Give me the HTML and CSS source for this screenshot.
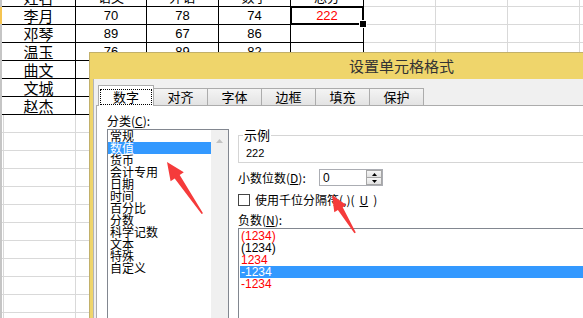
FILE: index.html
```html
<!DOCTYPE html>
<html lang="zh-CN">
<head>
  <meta charset="UTF-8" />
  <title>设置单元格格式</title>
  <link rel="stylesheet" href="styles.css">
</head>
<body>

  <!-- Sheet -->
  <div class="sheet">
    <div class="row-head"></div>
    <div class="grid">
      <div class="cell name">姓名</div><div class="cell">语文</div><div class="cell">外语</div><div class="cell">数学</div><div class="cell">总分</div>
      <div class="cell name">李月</div><div class="cell">70</div><div class="cell">78</div><div class="cell">74</div><div class="cell total">222</div>
      <div class="cell name">邓琴</div><div class="cell">89</div><div class="cell">67</div><div class="cell">86</div><div class="cell"></div>
      <div class="cell name">温玉</div><div class="cell">76</div><div class="cell">89</div><div class="cell">82</div><div class="cell"></div>
      <div class="cell name">曲文</div><div class="cell">81</div><div class="cell">75</div><div class="cell">90</div><div class="cell"></div>
      <div class="cell name">文城</div><div class="cell">68</div><div class="cell">72</div><div class="cell">79</div><div class="cell"></div>
      <div class="cell name">赵杰</div><div class="cell">92</div><div class="cell">84</div><div class="cell">88</div><div class="cell"></div>
    </div>
  </div>

  <!-- Dialog -->
  <div class="dialog">
    <div class="title">设置单元格格式</div>
    <div class="dlg-body">
      <div class="tabs">
        <div class="tab active"><span class="focus">数字</span></div>
        <div class="tab">对齐</div>
        <div class="tab">字体</div>
        <div class="tab">边框</div>
        <div class="tab">填充</div>
        <div class="tab">保护</div>
      </div>
      <div class="panel">
        <div class="col-left">
          <div class="label">分类(<u>C</u>):</div>
          <div class="listbox">
            <ul class="items">
              <li>常规</li>
              <li class="sel">数值</li>
              <li>货币</li>
              <li>会计专用</li>
              <li>日期</li>
              <li>时间</li>
              <li>百分比</li>
              <li>分数</li>
              <li>科学记数</li>
              <li>文本</li>
              <li>特殊</li>
              <li>自定义</li>
            </ul>
            <div class="vscroll">
              <svg width="7" height="4" viewBox="0 0 7 4"><path d="M0 4 L3.5 0 L7 4 Z" fill="#c2c2c2"/></svg>
            </div>
          </div>
        </div>
        <div class="col-right">
          <fieldset class="sample">
            <legend>示例</legend>
            <div class="sample-value">222</div>
          </fieldset>
          <div class="field-row">
            <span class="field-label">小数位数(<u>D</u>):</span>
            <div class="spin">
              <span>0</span>
              <div class="spin-btns">
                <div class="spin-btn"><svg width="5" height="3" viewBox="0 0 5 3"><path d="M0 3 L2.5 0 L5 3 Z" fill="#000"/></svg></div>
                <div class="spin-btn"><svg width="5" height="3" viewBox="0 0 5 3"><path d="M0 0 L2.5 3 L5 0 Z" fill="#000"/></svg></div>
              </div>
            </div>
          </div>
          <div class="check-row"><span class="checkbox"></span>使用千位分隔符(,)(<u>U</u>)</div>
          <div class="label neg">负数(<u>N</u>):</div>
          <ul class="neg-list">
            <li class="red">(1234)</li>
            <li>(1234)</li>
            <li class="red">1234</li>
            <li class="sel">-1234</li>
            <li class="red">-1234</li>
          </ul>
        </div>
      </div>
    </div>
  </div>

  <!-- Annotation arrows -->
  <svg class="arrows" width="583" height="318" viewBox="0 0 583 318">
    <polygon points="167,162 183.8,172.3 179.7,175.1 203,213.3 201.6,214 174.7,178.5 170.6,181.3" fill="#f53b3b"/>
    <polygon points="332,195 346.3,205.1 342.7,207.2 355.8,232.6 354.4,233.3 337.9,210.1 334.3,212.3" fill="#f53b3b"/>
  </svg>

</body>
</html>
```

FILE: styles.css
```css
* {
  box-sizing: border-box;
  margin: 0;
  padding: 0;
}

body {
  width: 583px;
  height: 318px;
  overflow: hidden;
  position: relative;
  background: #fff;
  font-family: "Noto Sans CJK SC", sans-serif;
  color: #000;
}

/* Sheet */
.sheet {
  display: flex;
  height: 318px;
  background-color: #fff;
  background-image:
    linear-gradient(to bottom, transparent 17px, #d9d9d9 17px),
    linear-gradient(to right, transparent 71px, #d9d9d9 71px);
  background-size: 100% 18px, 72px 100%;
  background-position: 0 7px, 4px 0;
}

.row-head {
  width: 2px;
  flex: none;
  background: linear-gradient(to bottom, #c5c5c5 7px, #f5c451 7px, #f5c451 24px, #c5c5c5 24px);
}

.grid {
  display: grid;
  grid-template-columns: 73px 70px 71px 71px 72px;
  grid-auto-rows: 17px;
  gap: 1px;
  background: #000;
  border-right: 1px solid #000;
  border-bottom: 1px solid #000;
  margin-top: -11px;
  align-self: flex-start;
}

.cell {
  background: #fff;
  display: flex;
  align-items: center;
  justify-content: center;
  font: 13px/17px "Liberation Sans", "Noto Sans CJK SC", sans-serif;
}

.cell.name {
  font: 15px/17px "Noto Sans CJK SC", sans-serif;
}

.cell.total {
  color: #f00;
  position: relative;
  z-index: 1;
  outline: 2px solid #000;
  outline-offset: -1px;
}

.cell.total::after {
  content: "";
  position: absolute;
  right: -4px;
  bottom: -4px;
  width: 6px;
  height: 6px;
  background: #000;
  border: 1px solid #fff;
}

/* Dialog */
.dialog {
  position: absolute;
  left: 89px;
  top: 52px;
  width: 626px;
  height: 280px;
  background: #efd56b;
  border: 1px solid #c2b06a;
  padding: 0 4px 4px 3px;
}

.title {
  height: 26px;
  line-height: 26px;
  text-align: center;
  font-size: 15px;
  color: #333;
}

.dlg-body {
  background: #f0f0f0;
  border-left: 1px solid #b5b5b5;
  height: calc(100% - 26px);
  padding: 6px 0 0 2px;
}

.tabs {
  display: flex;
  align-items: flex-end;
  height: 20px;
  padding-left: 2px;
  position: relative;
  z-index: 1;
}

.tab {
  width: 55px;
  height: 17px;
  margin-left: -1px;
  border: 1px solid #acacac;
  border-bottom: none;
  background: linear-gradient(#f4f4f4, #e3e3e3);
  font-size: 13px;
  line-height: 16px;
  text-align: center;
}

.tab.active {
  width: 56px;
  height: 21px;
  margin-left: 0;
  margin-bottom: -1px;
  padding-top: 3px;
  background: #fff;
}

.focus {
  display: inline-block;
  outline: 1px dotted #000;
  padding: 0 12px;
  line-height: 14px;
}

.panel {
  display: flex;
  gap: 9px;
  height: 230px;
  background: #fff;
  border: 1px solid #acacac;
  padding: 7px 0 0 10px;
}

.col-left {
  width: 122px;
  flex: none;
}

.label {
  font-size: 12px;
  line-height: 16px;
  height: 16px;
}

.listbox {
  display: flex;
  height: 200px;
  border: 1px solid #828790;
}

.items {
  list-style: none;
  flex: 1;
}

.items li {
  font-size: 12px;
  line-height: 12px;
  height: 12px;
  padding-left: 2px;
  white-space: nowrap;
}

.items li.sel,
.neg-list li.sel {
  background: #3399ff;
  color: #fff;
}

.vscroll {
  width: 17px;
  background: #f0f0f0;
  display: flex;
  justify-content: center;
  align-items: flex-start;
  padding-top: 9px;
}

.vscroll svg {
  display: block;
}

.col-right {
  flex: 1;
}

.sample {
  margin-top: 15px;
  border: 1px solid #d5d5d5;
  padding: 0 0 2px 4px;
}

.sample legend {
  padding: 0 1px;
  font-size: 13px;
  line-height: 14px;
}

.sample-value {
  font: 11px/14px "Liberation Sans", sans-serif;
  padding: 4px 0 0 3px;
}

.field-row {
  display: flex;
  align-items: center;
  height: 17px;
  margin-top: 6px;
}

.field-label {
  width: 81px;
  font-size: 12px;
  line-height: 14px;
}

.spin {
  width: 64px;
  height: 17px;
  border: 1px solid #abadb3;
  display: flex;
  align-items: center;
  justify-content: space-between;
  padding-left: 3px;
  font: 12px "Liberation Sans", sans-serif;
}

.spin-btns {
  width: 16px;
  height: 15px;
  display: flex;
  flex-direction: column;
}

.spin-btn {
  flex: 1;
  display: flex;
  align-items: center;
  justify-content: center;
  border: 1px solid #a6a6a6;
  background: linear-gradient(#f6f6f6, #e2e2e2);
}

.spin-btn + .spin-btn {
  border-top: none;
}

.spin-btn svg {
  display: block;
}

.check-row {
  display: flex;
  align-items: center;
  gap: 5px;
  height: 12px;
  margin-top: 8px;
  font-size: 12px;
  line-height: 12px;
}

.checkbox {
  width: 12px;
  height: 12px;
  border: 1px solid #444;
  background: #fff;
}

.label.neg {
  margin-top: 6px;
}

.neg-list {
  list-style: none;
  height: 100px;
  border-top: 1px solid #828790;
  border-left: 1px solid #828790;
  padding: 1px 0 0 1px;
}

.neg-list li {
  font: 12px/12px "Liberation Sans", sans-serif;
  height: 12px;
  padding-left: 1px;
}

.red {
  color: #f00;
}

/* Arrows */
.arrows {
  position: absolute;
  left: 0;
  top: 0;
  pointer-events: none;
}
```
